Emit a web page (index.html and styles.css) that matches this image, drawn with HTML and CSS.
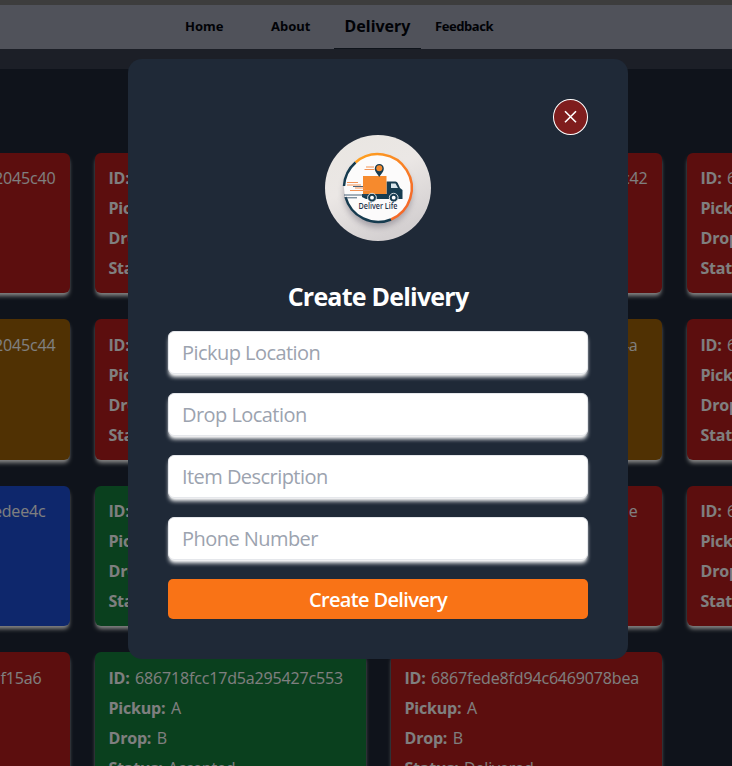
FILE: index.html
```html
<!DOCTYPE html>
<html lang="en">
<head>
<meta charset="utf-8">
<title>Deliver Life</title>
<link rel="stylesheet" href="styles.css">
</head>
<body>
<div class="page">
  <div class="topbar"></div>
  <nav class="nav">
    <a class="home">Home</a><a class="about">About</a><a class="active"><span>Delivery</span></a><a class="feedback">Feedback</a>
  </nav>
  <div class="strip"></div>
  <main class="grid">
    <article class="card red end14"><p>2045c40</p></article>
    <article class="card red"><p><b>ID:</b></p><p><b>Pickup:</b></p><p><b>Drop:</b></p><p><b>Status:</b></p></article>
    <article class="card red end14"><p>c42</p></article>
    <article class="card red"><p><b>ID:</b> 6867</p><p><b>Pickup:</b></p><p><b>Drop:</b></p><p><b>Status:</b></p></article>

    <article class="card amber end14"><p>2045c44</p></article>
    <article class="card red"><p><b>ID:</b></p><p><b>Pickup:</b></p><p><b>Drop:</b></p><p><b>Status:</b></p></article>
    <article class="card amber end24"><p>4a</p></article>
    <article class="card red"><p><b>ID:</b> 6867</p><p><b>Pickup:</b></p><p><b>Drop:</b></p><p><b>Status:</b></p></article>

    <article class="card blue end24"><p>edee4c</p></article>
    <article class="card green"><p><b>ID:</b></p><p><b>Pickup:</b></p><p><b>Drop:</b></p><p><b>Status:</b></p></article>
    <article class="card red end24"><p>e</p></article>
    <article class="card red"><p><b>ID:</b> 6867</p><p><b>Pickup:</b></p><p><b>Drop:</b></p><p><b>Status:</b></p></article>

    <article class="card red end28 last"><p>1f15a6</p></article>
    <article class="card green last"><p><b>ID:</b> 686718fcc17d5a295427c553</p><p><b>Pickup:</b> A</p><p><b>Drop:</b> B</p><p><b>Status:</b> Accepted</p></article>
    <article class="card red last"><p><b>ID:</b> 6867fede8fd94c6469078bea</p><p><b>Pickup:</b> A</p><p><b>Drop:</b> B</p><p><b>Status:</b> Delivered</p></article>
  </main>
</div>
<div class="overlay">
  <section class="modal">
    <button class="close" aria-label="Close"><svg width="14" height="14" viewBox="0 0 14 14"><path d="M1 1.300 12 12.300M12 1.300 1 12.300" stroke="#fff" stroke-width="1.6"/></svg></button>
    <svg class="logo" viewBox="0 0 106 106">
      <defs>
        <linearGradient id="disc" x1="0" y1="0" x2=".5" y2="1"><stop offset="0" stop-color="#e9e6e1"/><stop offset=".5" stop-color="#ebe7e5"/><stop offset="1" stop-color="#d4d0d1"/></linearGradient>
        <linearGradient id="ring" x1="0" y1="0" x2="1" y2="1"><stop offset="0" stop-color="#ffa31f"/><stop offset="1" stop-color="#f3602b"/></linearGradient>
        <filter id="soft" x="-30%" y="-30%" width="160%" height="160%"><feGaussianBlur stdDeviation="3"/></filter>
      </defs>
      <circle cx="53" cy="53" r="53" fill="url(#disc)"/>
      <circle cx="53" cy="58" r="34" fill="#736e7c" opacity=".55" filter="url(#soft)"/>
      <circle cx="53" cy="53" r="34" fill="#fcfbfb"/>
      <path d="M30.500 27.500A34 34 0 1 1 66 84.500" fill="none" stroke="url(#ring)" stroke-width="2.500"/>
      <path d="M66 84.500A34 34 0 0 1 20.500 62M19 51A34 34 0 0 1 30.500 27.500" fill="none" stroke="#163b4f" stroke-width="2.500"/>
      <path d="M37 59h24.500v-12.500h9q1.500 0 2.200 1.500l2.300 5 2.500 2v9H41l-4-2z" fill="#173c50"/>
      <path d="M38 41H61.500V59H38Z" fill="#f68a2d"/>
      <path d="M66 48.500h4.500l2.500 4.500h-7z" fill="#d8e5ec"/>
      <path d="M54.300 42c-1.500-3-4.500-4.800-4.500-8.500a4.500 4.500 0 0 1 9 0c0 3.700-3 5.500-4.500 8.500z" fill="#173c50"/>
      <circle cx="54.300" cy="33.300" r="3" fill="#f68a2d"/>
      <path d="M41 32h8M39.500 34.500h10M22 47.500h11M22 50h14M25 55.500h20M30 53h10" stroke="#f39456" stroke-width="1"/>
      <path d="M28 51.500h10M19 60h23M20 62.800h12" stroke="#35516a" stroke-width=".9"/>
      <g fill="#173c50" stroke="#fff" stroke-width=".8"><circle cx="47" cy="62.700" r="4.400"/><circle cx="68.700" cy="62.700" r="4.400"/></g>
      <g fill="#fff"><circle cx="47" cy="62.700" r="1.900"/><circle cx="68.700" cy="62.700" r="1.900"/></g>
      <text x="53" y="74" text-anchor="middle" textLength="39" lengthAdjust="spacingAndGlyphs">Deliver Life</text>
    </svg>
    <h2>Create Delivery</h2>
    <form>
      <input type="text" placeholder="Pickup Location">
      <input type="text" placeholder="Drop Location">
      <input type="text" placeholder="Item Description">
      <input type="text" placeholder="Phone Number">
      <button type="button" class="submit">Create Delivery</button>
    </form>
  </section>
</div>
</body>
</html>
```
FILE: styles.css
```css
* { box-sizing: border-box; }
body { margin: 0; width: 732px; height: 766px; overflow: hidden; font-family: "Open Sans", "Noto Sans", sans-serif; }
.page { height: 766px; overflow: hidden; background: #1f2736; }
.topbar { height: 5px; background: #7a7a7a; }
.nav { height: 44px; display: flex; background: #a0a5b4; color: #02040d; font: 700 13px/42px "Noto Sans", sans-serif; }
.home { margin-left: 185px; width: 86px; }
.about { width: 63px; }
.feedback { letter-spacing: -.45px; }
.active { width: 87px; margin-right: 14px; text-align: center; font-size: 16px; border-bottom: 1px solid #1f2937; }
.strip { height: 20px; background: #383e4e; }
.grid { width: 1160px; margin: 84px 0 0 -201.500px; display: grid; grid-template-columns: repeat(4, 271px); grid-auto-rows: 140.400px; gap: 26px 25px; }
.card { padding: 10.300px 14px; border-radius: 6px; color: #fff; font-size: 16px; line-height: 30px; letter-spacing: -.16px; white-space: nowrap; box-shadow: 0 4px 4px -1px #fff, 0 2px 3px -2px #fff; }
.card p { margin: 0; }
.card b { font-weight: 700; letter-spacing: -.2px; margin-right: 1.500px; }
.last { padding-top: 11px; }
.red { background: #b91c1c; }
.amber { background: #a16207; }
.blue { background: #1d4ed8; }
.green { background: #15803d; }
.end14, .end24, .end28 { text-align: right; }
.end24 { padding-right: 24px; }
.end28 { padding-right: 28px; }
.overlay { position: fixed; inset: 0; display: flex; justify-content: center; align-items: flex-start; padding: 59px 0 0 24px; background: rgba(0, 0, 0, .5); }
.modal { width: 500px; height: 600px; padding: 40px; border-radius: 14px; background: #1f2937; display: flex; flex-direction: column; align-items: center; }
.close { align-self: flex-end; width: 35px; height: 36px; padding: 0; border: 1px solid #fff; border-radius: 50%; background: #7f1d1d; display: grid; place-items: center; }
.logo { width: 106px; height: 106px; flex: none; }
.logo text { font: 600 8.500px "Open Sans", sans-serif; fill: #1f3149; }
h2 { margin: 39px 0 0; height: 51px; color: #fff; font-size: 25px; line-height: 32px; font-weight: 700; letter-spacing: -.78px; }
form { width: 420px; display: flex; flex-direction: column; gap: 19px; }
input { width: 100%; height: 43px; padding: 0 13px; border: 1px solid #e5e7eb; border-radius: 6px; background: #fff; font: 400 20px "Open Sans", sans-serif; letter-spacing: -.55px; box-shadow: 0 4px 4px -1px #fff, 0 2px 3px -2px #fff; }
input::placeholder { color: #9ca3af; }
.submit { height: 40px; border: 0; border-radius: 5px; background: #f97316; color: #fff; font: 600 20px "Open Sans", sans-serif; letter-spacing: -.65px; }
```
